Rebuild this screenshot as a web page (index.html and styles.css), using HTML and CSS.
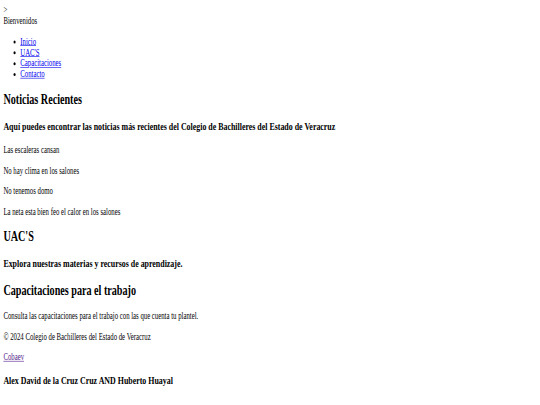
FILE: index.html
```html
<!DOCTYPE html>
<html lang="es">
<head>
<meta charset="utf-8">
<title>Cobaev</title>
<link rel="stylesheet" href="styles.css">
</head>
<body>
<div class="frame">
<div class="screen">
  <header class="top">
    <div class="arrow">&gt;</div>
    <div class="welcome">Bienvenidos</div>
    <ul class="nav">
      <li><a class="link" href="#">Inicio</a></li>
      <li><a class="link" href="#">UAC'S</a></li>
      <li><a class="link" href="#">Capacitaciones</a></li>
      <li><a class="link" href="#">Contacto</a></li>
    </ul>
  </header>
  <section>
    <h2 class="h2">Noticias Recientes</h2>
    <h3 class="h3">Aquí puedes encontrar las noticias más recientes del Colegio de Bachilleres del Estado de Veracruz</h3>
    <p class="p">Las escaleras cansan</p>
    <p class="p">No hay clima en los salones</p>
    <p class="p">No tenemos domo</p>
    <p class="p">La neta esta bien feo el calor en los salones</p>
  </section>
  <section>
    <h2 class="h2">UAC'S</h2>
    <h3 class="h3">Explora nuestras materias y recursos de aprendizaje.</h3>
  </section>
  <section>
    <h2 class="h2">Capacitaciones para el trabajo</h2>
    <p class="p">Consulta las capacitaciones para el trabajo con las que cuenta tu plantel.</p>
  </section>
  <footer>
    <p class="p">© 2024 Colegio de Bachilleres del Estado de Veracruz</p>
    <p class="p"><a class="link visited" href="#">Cobaev</a></p>
    <h3 class="h3">Alex David de la Cruz Cruz AND Huberto Huayal</h3>
  </footer>
</div>
</div>
</body>
</html>
```
FILE: styles.css
```css
html, body {
  margin: 0;
  padding: 0;
  background: #ffffff;
  overflow: hidden;
}
.frame {
  width: 540px;
  height: 405px;
  overflow: hidden;
}
.screen {
  width: 1278px;
  height: 671px;
  box-sizing: border-box;
  padding: 8px;
  transform: scale(0.4225, 0.6035);
  transform-origin: 0 0;
  font-family: "Liberation Serif", "Times New Roman", serif;
  font-size: 16px;
  color: #000000;
  overflow: hidden;
}
.nav {
  margin: 16px 0;
  padding-left: 40px;
  list-style: disc;
}
.link {
  color: #0000ee;
  text-decoration: underline;
}
.link.visited {
  color: #551a8b;
}
.h2 {
  font-size: 24px;
  font-weight: bold;
  margin: 19.92px 0;
}
.h3 {
  font-size: 18.72px;
  font-weight: bold;
  margin: 18.72px 0;
}
.p {
  margin: 16px 0;
}
```
